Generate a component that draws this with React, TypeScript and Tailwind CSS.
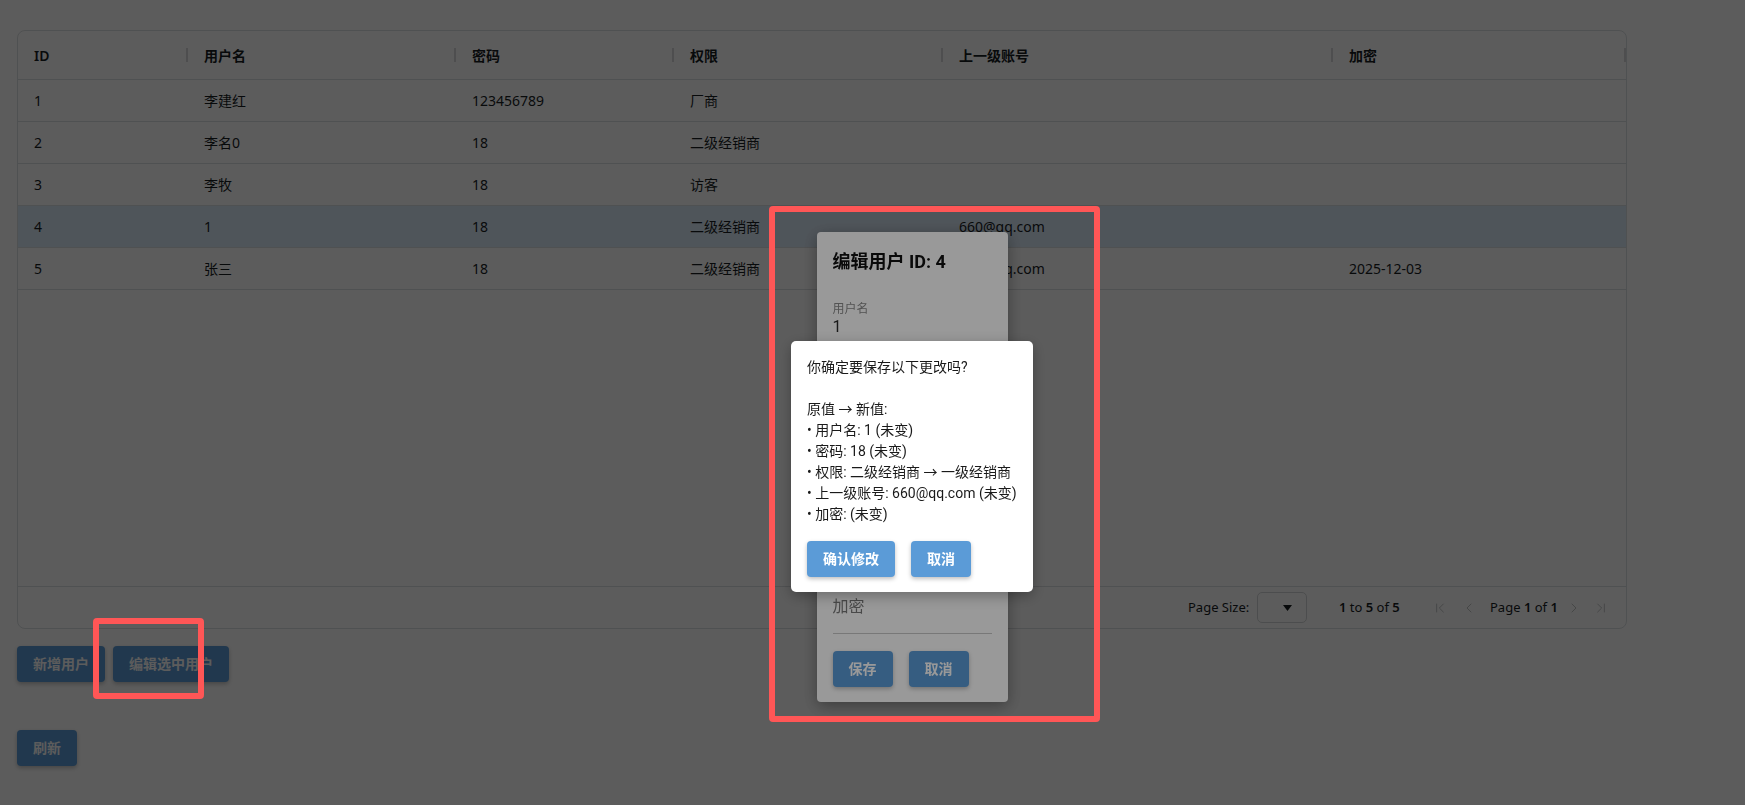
import React from 'react';
import { ChevronFirst, ChevronLast, ChevronLeft, ChevronRight } from 'lucide-react';

const gridFont = { fontFamily: '"Noto Sans", "Noto Sans CJK SC", sans-serif' };
const muiFont = { fontFamily: 'Roboto, "Noto Sans CJK SC", sans-serif' };

const columns = [
  { title: 'ID', width: 'w-[170px]' },
  { title: '用户名', width: 'w-[268px]' },
  { title: '密码', width: 'w-[218px]' },
  { title: '权限', width: 'w-[269px]' },
  { title: '上一级账号', width: 'w-[390px]' },
  { title: '加密', width: 'w-[293px]' },
];

const rows = [
  ['1', '李建红', '123456789', '厂商', '', ''],
  ['2', '李名0', '18', '二级经销商', '', ''],
  ['3', '李牧', '18', '访客', '', ''],
  ['4', '1', '18', '二级经销商', '660@qq.com', ''],
  ['5', '张三', '18', '二级经销商', '660@qq.com', '2025-12-03'],
];

const selectedId = '4';

const confirmText = `你确定要保存以下更改吗?

原值 → 新值:
• 用户名: 1 (未变)
• 密码: 18 (未变)
• 权限: 二级经销商 → 一级经销商
• 上一级账号: 660@qq.com (未变)
• 加密: (未变)`;

function BlueButton({ children }: { children: React.ReactNode }) {
  return (
    <button className="h-9 px-4 rounded-[4px] bg-[#5b9bd7] text-white text-sm font-bold shadow-[0_2px_4px_rgba(0,0,0,0.25)] whitespace-nowrap">
      {children}
    </button>
  );
}

function Field({ label, value }: { label: string; value?: string }) {
  return (
    <div className="flex flex-col mb-[17px]">
      <div className="h-4 text-[12px] leading-4 text-[#8a8a8a]">{value ? label : ''}</div>
      <div className={`h-[20px] text-[16px] leading-[20px] ${value ? 'text-[#2a2a2a]' : 'text-[#7a7a7a]'}`}>
        {value || label}
      </div>
      <div className="h-4 border-b border-[#c8c8c8] box-content" />
    </div>
  );
}

function UserGrid() {
  return (
    <div
      className="w-[1610px] h-[599px] flex flex-col border border-[#dcdfe2] rounded-[8px] bg-white text-[14px] text-[#181d1f] overflow-hidden"
      style={gridFont}
    >
      <div className="flex h-[49px] border-b border-[#dcdfe2] shrink-0">
        {columns.map((c) => (
          <div key={c.title} className={`${c.width} flex items-center font-semibold`}>
            <div className="flex-1 pl-4">{c.title}</div>
            <div className="w-[2px] h-[14px] bg-[#d7d9db]" />
          </div>
        ))}
      </div>

      <div className="flex-1">
        {rows.map((r) => (
          <div
            key={r[0]}
            className={`flex h-[42px] border-b border-[#dcdfe2] ${r[0] === selectedId ? 'bg-[#dcebf9]' : ''}`}
          >
            {r.map((cell, i) => (
              <div key={i} className={`${columns[i].width} flex items-center pl-4 whitespace-nowrap`}>
                {cell}
              </div>
            ))}
          </div>
        ))}
      </div>

      {/* pagination panel */}
      <div className="h-[42px] border-t border-[#dcdfe2] flex items-center justify-end pr-[17px] shrink-0 text-[13px]">
        <span className="w-[61px] whitespace-nowrap">Page Size:</span>
        <div className="ml-2 w-[50px] h-[31px] border border-[#d3d6d8] rounded-[5px] flex items-center justify-end pr-[14px]">
          <svg width="9" height="6" viewBox="0 0 9 6">
            <polygon points="0,0 9,0 4.5,6" fill="#181d1f" />
          </svg>
        </div>
        <span className="ml-8 w-[62px] whitespace-nowrap">
          <b className="font-semibold">1</b> to <b className="font-semibold">5</b> of <b className="font-semibold">5</b>
        </span>
        <ChevronFirst className="ml-[31px] text-[#c2c4c6]" size={16} strokeWidth={1.5} />
        <ChevronLeft className="ml-[13px] text-[#c2c4c6]" size={16} strokeWidth={1.5} />
        <span className="ml-[13px] w-[65px] whitespace-nowrap">
          Page <b className="font-semibold">1</b> of <b className="font-semibold">1</b>
        </span>
        <ChevronRight className="ml-[11px] text-[#c2c4c6]" size={16} strokeWidth={1.5} />
        <ChevronLast className="ml-[11px] text-[#c2c4c6]" size={16} strokeWidth={1.5} />
      </div>
    </div>
  );
}

export default function App() {
  return (
    <div className="relative w-[1745px] h-[805px] overflow-hidden bg-white">
      <div className="pl-[17px] pt-[30px]">
        <UserGrid />
        <div className="flex gap-2 mt-[17px]" style={muiFont}>
          <BlueButton>新增用户</BlueButton>
          <BlueButton>编辑选中用户</BlueButton>
        </div>
        <div className="mt-12" style={muiFont}>
          <BlueButton>刷新</BlueButton>
        </div>
      </div>

      {/* edit dialog */}
      <div className="fixed inset-0 bg-black/40 flex items-center justify-center pl-[79px] pt-[128px]" style={muiFont}>
        <div className="w-[191px] bg-white rounded-[4px] shadow-[0_4px_16px_rgba(0,0,0,0.35)] p-4 pb-[15px]">
          <div className="text-[18px] leading-7 font-bold text-[#111] mb-[25px]">编辑用户 ID: 4</div>
          <Field label="用户名" value="1" />
          <Field label="密码" value="18" />
          <Field label="权限" value="一级经销商" />
          <Field label="上一级账号" value="660@qq.com" />
          <Field label="加密" />
          <div className="flex gap-4">
            <BlueButton>保存</BlueButton>
            <BlueButton>取消</BlueButton>
          </div>
        </div>
      </div>

      {/* confirm dialog */}
      <div className="fixed inset-0 bg-black/40 flex items-center justify-center pl-[79px] pt-[128px]" style={muiFont}>
        <div className="w-[242px] bg-white rounded-[5px] shadow-[0_4px_14px_rgba(0,0,0,0.3)] p-4 pb-[15px]">
          <div className="whitespace-pre text-[14px] leading-[21px] text-[#1a1a1a]">{confirmText}</div>
          <div className="flex gap-4 mt-4">
            <BlueButton>确认修改</BlueButton>
            <BlueButton>取消</BlueButton>
          </div>
        </div>
      </div>

      {/* annotation boxes */}
      <div className="absolute left-[93px] top-[618px] w-[111px] h-[81px] border-[6px] border-[#ff5656] rounded-[4px]" />
      <div className="absolute left-[769px] top-[206px] w-[331px] h-[516px] border-[6px] border-[#ff5656] rounded-[4px]" />
    </div>
  );
}
